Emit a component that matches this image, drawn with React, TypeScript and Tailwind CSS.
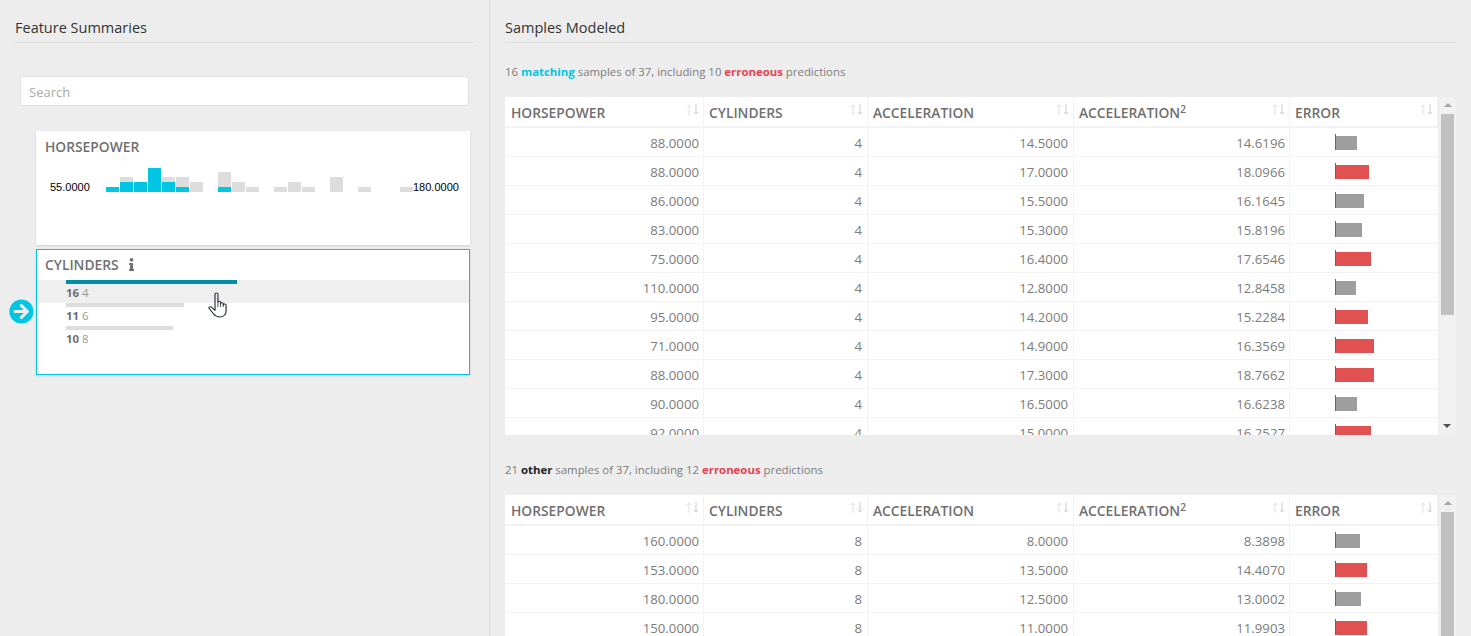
import React from 'react';
import { FaArrowCircleRight, FaInfo } from 'react-icons/fa';

const columns = ['HORSEPOWER', 'CYLINDERS', 'ACCELERATION', 'ACCELERATION2', 'ERROR'];

interface Sample {
  horsepower: string;
  cylinders: string;
  acceleration: string;
  predicted: string;
  error: number;
  wrong: boolean;
}

const row = (horsepower: string, cylinders: string, acceleration: string, predicted: string, error: number, wrong: boolean): Sample => ({
  horsepower, cylinders, acceleration, predicted, error, wrong,
});

const matching: Sample[] = [
  row('88.0000', '4', '14.5000', '14.6196', 21, false),
  row('88.0000', '4', '17.0000', '18.0966', 33, true),
  row('86.0000', '4', '15.5000', '16.1645', 28, false),
  row('83.0000', '4', '15.3000', '15.8196', 26, false),
  row('75.0000', '4', '16.4000', '17.6546', 35, true),
  row('110.0000', '4', '12.8000', '12.8458', 20, false),
  row('95.0000', '4', '14.2000', '15.2284', 32, true),
  row('71.0000', '4', '14.9000', '16.3569', 38, true),
  row('88.0000', '4', '17.3000', '18.7662', 38, true),
  row('90.0000', '4', '16.5000', '16.6238', 21, false),
  row('92.0000', '4', '15.0000', '16.2527', 35, true),
];

const other: Sample[] = [
  row('160.0000', '8', '8.0000', '8.3898', 24, false),
  row('153.0000', '8', '13.5000', '14.4070', 31, true),
  row('180.0000', '8', '12.5000', '13.0002', 25, false),
  row('150.0000', '8', '11.0000', '11.9903', 31, true),
];

// x offset, total height, cyan height
const bins = [
  [0, 5, 5], [14, 15, 10], [28, 10, 10], [42, 24, 24], [56, 15, 10], [70, 15, 5], [84, 10, 0],
  [112, 20, 5], [126, 10, 0], [140, 5, 0], [168, 5, 0], [182, 10, 0], [196, 5, 0], [224, 15, 0],
  [252, 5, 0], [294, 5, 0],
];

const Histogram: React.FC = () => (
  <div className="relative mt-[10px] h-[30px]">
    <svg width="320" height="30" className="absolute left-[61px] top-0">
      {bins.map(([x, total, cyan]) => (
        <g key={x}>
          <rect x={x} y={25 - total} width="13" height={total} fill="#dddddd" />
          {cyan > 0 && <rect x={x} y={25 - cyan} width="13" height={cyan} fill="#00c5e3" />}
        </g>
      ))}
    </svg>
    <span className="absolute left-[5px] top-[14px] font-['Liberation_Sans',sans-serif] text-[11px] leading-[13px] text-black">55.0000</span>
    <span className="absolute left-[368px] top-[14px] font-['Liberation_Sans',sans-serif] text-[11px] leading-[13px] text-black">180.0000</span>
  </div>
);

const SortIcon: React.FC = () => (
  <svg width="13" height="11" viewBox="0 0 13 11" fill="none" className="absolute right-[4px] top-[7px]">
    <path d="M3 11V1M.8 3.200 3 1l2.200 2.200" stroke="#e0e0e0" />
    <path d="M10 0v10M7.800 7.800 10 10l2.200-2.200" stroke="#cccccc" />
  </svg>
);

const Scrollbar: React.FC<{ thumbHeight: number }> = ({ thumbHeight }) => (
  <div className="relative ml-px w-[17px] bg-[#f1f1f1]">
    <div className="mx-auto mt-[6px] h-0 w-0 border-x-[4px] border-b-[4px] border-x-transparent border-b-[#a3a3a3]" />
    <div className="mx-auto mt-[7px] w-[13px] bg-[#c1c1c1]" style={{ height: thumbHeight }} />
    <div className="absolute bottom-[7px] left-[4px] h-0 w-0 border-x-[4px] border-t-[4px] border-x-transparent border-t-[#505050]" />
  </div>
);

const SampleTable: React.FC<{ samples: Sample[]; thumbHeight: number }> = ({ samples, thumbHeight }) => (
  <div className="flex h-[338px] shrink-0 overflow-hidden">
    <div className="w-[933px] overflow-hidden bg-white">
      <div className="grid grid-cols-[199px_164px_206px_216px_148px] border-b-2 border-[#f3f3f3]">
        {columns.map((name, i) => (
          <div key={name} className={`relative h-[29px] border-r border-[#f3f3f3] text-[13.8px] leading-[31px] font-semibold text-[#6f6f6f] ${i === 0 ? 'pl-[6px]' : 'pl-[5px]'}`}>
            {name === 'ACCELERATION2' ? <>ACCELERATION<sup className="text-[10px]">2</sup></> : name}
            <SortIcon />
          </div>
        ))}
      </div>
      {samples.map((s, i) => (
        <div key={i} className="grid h-[29px] grid-cols-[199px_164px_206px_216px_148px] border-b border-[#f3f3f3] text-right text-[13.2px] leading-[30px] text-[#7c7c7c]">
          <div className="border-r border-[#f3f3f3] pr-1">{s.horsepower}</div>
          <div className="border-r border-[#f3f3f3] pr-[5px]">{s.cylinders}</div>
          <div className="border-r border-[#f3f3f3] pr-[5px]">{s.acceleration}</div>
          <div className="border-r border-[#f3f3f3] pr-1">{s.predicted}</div>
          <div className="flex items-start pl-[45px] pt-[6px]">
            <div className="h-[16px] w-px bg-[#666666]" />
            <div className={`mt-[2px] h-[14px] ${s.wrong ? 'bg-[#e15151]' : 'bg-[#9e9e9e]'}`} style={{ width: s.error }} />
          </div>
        </div>
      ))}
    </div>
    <Scrollbar thumbHeight={thumbHeight} />
  </div>
);

const SectionTitle: React.FC<{ children: React.ReactNode }> = ({ children }) => (
  <h2 className="h-[43px] border-b border-[#dddddd] pt-[17px] text-[14.5px] leading-[22px] font-normal text-[#333333]">{children}</h2>
);

const CategoryRow: React.FC<{ count: string; label: string; barClass: string; active?: boolean }> = ({ count, label, barClass, active }) => (
  <div className={`h-[23px] ${active ? 'bg-[#efefef]' : ''}`}>
    <div className={`ml-[29px] h-[4px] ${barClass}`} />
    <div className="ml-[29px] text-[11.4px] leading-[18px] text-[#999999]">
      <b className="font-bold text-[#6f6f6f]">{count}</b> {label}
    </div>
  </div>
);

export default function App() {
  return (
    <div className="flex h-[636px] overflow-hidden bg-[#ededed] font-['Open_Sans',sans-serif]">
      <aside className="h-full w-[490px] shrink-0 border-r border-[#dddddd] px-[15px]">
        <SectionTitle>Feature Summaries</SectionTitle>
        <input
          placeholder="Search"
          className="ml-[5px] mt-[33px] block h-[30px] w-[449px] rounded-[3px] border border-[#e2e2e2] bg-white px-2 pt-[2px] text-[13px] placeholder:text-[#aaaaaa]"
        />
        <div className="ml-[21px] mt-[25px] h-[114px] w-[434px] bg-white px-[9px] pt-[6px] shadow-[0_1px_2px_rgba(0,0,0,0.12)]">
          <h3 className="text-[13.8px] leading-[20px] font-semibold text-[#6f6f6f]">HORSEPOWER</h3>
          <Histogram />
        </div>
        <div className="relative ml-[21px] mt-[4px] h-[126px] w-[434px] border border-[#00c5e3] bg-white shadow-[0_1px_2px_rgba(0,0,0,0.12)]">
          <h3 className="flex h-[30px] items-center gap-[6px] pl-[8px] text-[13.8px] font-semibold text-[#6f6f6f]">
            CYLINDERS <FaInfo className="-mt-px size-[13px]" />
          </h3>
          <CategoryRow count="16" label="4" barClass="w-[171px] bg-[#008ba6]" active />
          <CategoryRow count="11" label="6" barClass="w-[118px] bg-[#dddddd]" />
          <CategoryRow count="10" label="8" barClass="w-[107px] bg-[#dddddd]" />
          <FaArrowCircleRight className="absolute -left-[28px] top-[49px] size-[25px] text-[#00c5e3]" />
          <svg viewBox="0 0 18 26" preserveAspectRatio="none" className="absolute left-[171px] top-[42px] h-[26px] w-[21px]">
            <path
              d="M6 2c0-1.500 2.500-1.500 2.500 0v8c0-1 2.300-1 2.300 0.500v1c0-1.200 2.300-1.200 2.300 0.300v1c0-1.100 2.400-1 2.400 0.500v6c0 3-2 5.700-5.500 5.700-3 0-4-1.200-5.500-3.500l-3.500-5c-.8-1.400 1-2.500 2.200-1.200l2.800 3z"
              fill="white"
              stroke="#2a2f38"
              strokeWidth="1"
              strokeLinejoin="round"
            />
            <path d="M8.500 10v5M10.800 11v4M13.100 12v3" stroke="#2a2f38" strokeWidth="0.800" fill="none" />
          </svg>
        </div>
      </aside>
      <main className="min-w-0 flex-1 px-[15px]">
        <SectionTitle>Samples Modeled</SectionTitle>
        <p className="mt-[21px] h-[33px] text-[11.4px] leading-[16px] text-[#7c7c7c]">
          16 <b className="font-bold text-[#00c5e3]">matching</b> samples of 37, including 10 <b className="font-bold text-[#e8424f]">erroneous</b> predictions
        </p>
        <SampleTable samples={matching} thumbHeight={201} />
        <p className="mt-[27px] h-[33px] text-[11.4px] leading-[16px] text-[#7c7c7c]">
          21 <b className="font-bold text-[#222222]">other</b> samples of 37, including 12 <b className="font-bold text-[#e8424f]">erroneous</b> predictions
        </p>
        <SampleTable samples={other} thumbHeight={201} />
      </main>
    </div>
  );
}
